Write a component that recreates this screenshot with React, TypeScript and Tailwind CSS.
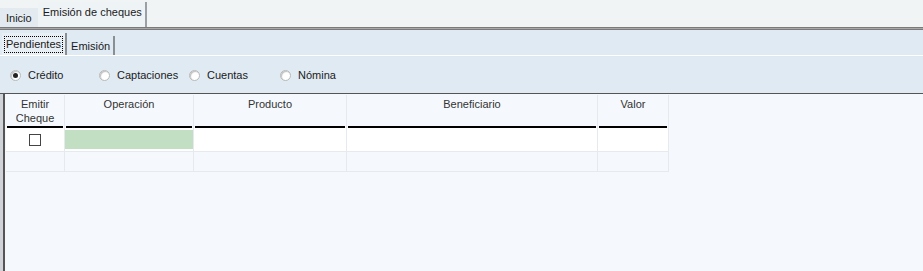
const font = { fontFamily: '"Liberation Sans", Arial, sans-serif' }

const columns = [
  { label: 'Emitir Cheque', w: 'w-[59px]' },
  { label: 'Operación', w: 'w-[129px]' },
  { label: 'Producto', w: 'w-[153px]' },
  { label: 'Beneficiario', w: 'w-[251px]' },
  { label: 'Valor', w: 'w-[71px]' },
]

const Radio = ({ label, checked }: { label: string; checked?: boolean }) => (
  <label className="flex items-center gap-[7px]">
    <span className="flex h-[11px] w-[11px] items-center justify-center rounded-full border border-[#b8b8b8] bg-white shadow-[inset_1px_1px_1px_rgba(0,0,0,0.25)]">
      {checked && <span className="h-[5px] w-[5px] rounded-full bg-[#222]" />}
    </span>
    <span>{label}</span>
  </label>
)

export default function App() {
  return (
    <div className="h-[271px] w-[923px] overflow-hidden bg-[#f0f4f4] text-[11px] text-[#1a1a1a]" style={font}>
      {/* pestañas principales */}
      <div className="flex h-[27px] items-end">
        <div className="flex h-[19px] items-center bg-[#e3ebf0] px-[6px] pt-[1px]">Inicio</div>
        <div className="flex h-[25px] items-center border-r-2 border-[#9aa0a6] bg-[#eef3f6] pl-[5px] pr-[3px] pb-[4px]">
          Emisión de cheques
        </div>
      </div>
      <div className="h-[3px] border-y border-[#7a7a7a] bg-[#a8a8a8]" />

      <div className="bg-[#e0eaf3]">
        {/* sub pestañas */}
        <div className="flex h-[25px] items-end gap-[1px] px-[2px]">
          <div className="flex h-[22px] items-center border-r-2 border-[#8a8f94] bg-[#e8eff5] px-[2px]">
            <span className="border border-dotted border-black px-[1px] leading-[15px]">Pendientes</span>
          </div>
          <div className="flex h-[19px] items-center border-r-2 border-[#8a8f94] px-[3px] pt-[1px]">Emisión</div>
        </div>
        <div className="h-[2px] border-t border-white bg-[#dde8f1]" />

        {/* opciones */}
        <div className="flex h-[37px] items-center border-b border-[#555] pl-[10px]">
          <div className="w-[89px]"><Radio label="Crédito" checked /></div>
          <div className="w-[90px]"><Radio label="Captaciones" /></div>
          <div className="w-[91px]"><Radio label="Cuentas" /></div>
          <Radio label="Nómina" />
        </div>
      </div>

      {/* grilla */}
      <div className="flex h-[200px] border-l-[3px] border-[#d0d4d8] bg-[#f5f9fd]">
        <div className="flex border-l-2 border-[#555] pl-[1px] pt-[1px]">
          <div className="flex flex-col">
            <div className="flex h-[33px]">
              {columns.map((c) => (
                <div key={c.label} className={`${c.w} flex flex-col border-r border-[#e6eaee] px-[1px]`}>
                  <div className="flex-1 pt-[2px] text-center leading-[14px] text-[#333]">
                    {c.label === 'Emitir Cheque' ? (
                      <>Emitir<br />Cheque</>
                    ) : (
                      c.label
                    )}
                  </div>
                  <div className="h-[2px] bg-black" />
                </div>
              ))}
            </div>
            <div className="flex h-[24px] bg-white">
              {columns.map((c, i) => (
                <div key={c.label} className={`${c.w} flex items-center justify-center border-r border-b border-[#e6eaee] py-[2px]`}>
                  {i === 0 && <span className="h-[12px] w-[12px] border border-[#444] bg-white" />}
                  {i === 1 && <span className="h-full w-full bg-[#c3dfc3]" />}
                </div>
              ))}
            </div>
            <div className="flex h-[20px]">
              {columns.map((c) => (
                <div key={c.label} className={`${c.w} border-r border-b border-[#e6eaee]`} />
              ))}
            </div>
          </div>
        </div>
      </div>
    </div>
  )
}
